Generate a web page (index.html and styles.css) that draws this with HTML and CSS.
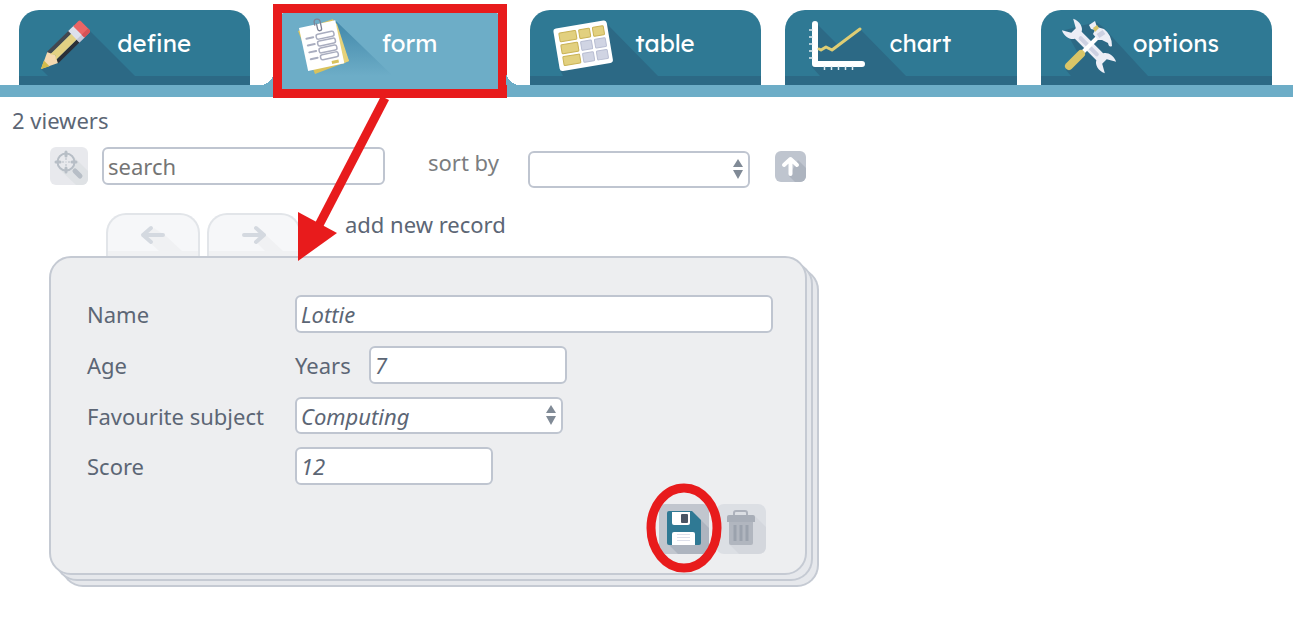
FILE: index.html
```html
<!DOCTYPE html>
<html lang="en">
  <head>
    <meta charset="utf-8">
    <title>Database - form</title>
    <link rel="stylesheet" href="styles.css">
  </head>
  <body>
    <nav class="tabs">
      <a class="tab" href="#define">
        <svg class="tab-icon" width="150" height="66" viewBox="0 0 150 66" aria-hidden="true">
          <path class="shade" d="M71 21 L116 66 H29 L22 59z"/>
          <g transform="translate(22 59) rotate(-44.5)">
            <path fill="#f5d9b0" d="M0 0 L17 -8 L20 0 L17 8z"/>
            <path fill="#d3bb4a" d="M0 0 L8 -4 L8 4z"/>
            <path fill="#434850" d="M16 -8 H48 V-4 H18z"/>
            <path fill="#2b3038" d="M16 8 H48 V4 H18z"/>
            <path fill="#e3d183" d="M17 -4 H48 V4 H17 L20 0z"/>
            <path fill="#dde0ec" d="M46 -8 H54 V8 H46z"/>
            <path fill="#c3c7d8" d="M46 4 H54 V8 H46z"/>
            <path fill="#ea6565" d="M53 -8 H60 Q62 -8 62 -6 V6 Q62 8 60 8 H53z"/>
            <path fill="#d65256" d="M53 4 H62 V6 Q62 8 60 8 H53z"/>
          </g>
        </svg>
        <span class="tab-label">define</span>
      </a>
      <a class="tab active" href="#form" aria-current="page">
        <svg class="tab-icon" width="150" height="66" viewBox="0 0 150 66" aria-hidden="true">
          <defs>
            <linearGradient id="fade" x1="0" y1="0" x2="0" y2="1">
              <stop offset="0" stop-color="#4288aa"/>
              <stop offset="1" stop-color="#6dadc7"/>
            </linearGradient>
          </defs>
          <path fill="url(#fade)" d="M62 11 L119 66 H42z"/>
          <path fill="#d9c25c" d="M24 21 L59 9 L75 51 L41 64z"/>
          <path fill="#e6d27a" d="M58 10 L63 14 L75 51 L68 54z"/>
          <g transform="translate(25 18) rotate(-12)">
            <rect width="37" height="44" fill="#fff"/>
            <g stroke="#a9adbf" stroke-width="1.5" stroke-linecap="round" fill="none">
              <path stroke-width="2" d="M5 12h7M5 19h7M5 26h7M5 33h7"/>
              <rect x="15" y="10" width="18" height="5" rx="2"/>
              <rect x="15" y="17" width="18" height="5" rx="2"/>
              <rect x="15" y="24" width="18" height="5" rx="2"/>
              <rect x="15" y="31" width="18" height="5" rx="2"/>
            </g>
            <rect x="25" y="39" width="7" height="3" fill="#d9c25c"/>
            <path fill="none" stroke="#7d8194" stroke-width="1.3" d="M16 1 V-2 Q16 -5 19 -5 T22 -2 V5 Q22 7 20 7 T18 5 V-1"/>
          </g>
        </svg>
        <span class="tab-label">form</span>
        <span class="highlight-box"></span>
        <svg class="highlight-arrow" width="70" height="170" viewBox="0 0 70 170" aria-hidden="true">
          <path stroke="#e81b1c" stroke-width="9" d="M89 1 L22 130"/>
          <path fill="#e81b1c" d="M2 115 L41 136 L2 164z"/>
        </svg>
      </a>
      <a class="tab" href="#table">
        <svg class="tab-icon" width="150" height="66" viewBox="0 0 150 66" aria-hidden="true">
          <path class="shade" d="M78 15 L128 66 H33 L30 60z"/>
          <g transform="translate(23 19) rotate(-9.5)">
            <rect width="54" height="43" rx="3" fill="#fff"/>
            <g fill="#e2d07f" stroke="#c9b255" stroke-width="1">
              <rect x="5" y="5" width="17" height="9" rx="1"/>
              <rect x="25" y="5" width="11" height="9" rx="1"/>
              <rect x="39" y="5" width="11" height="9" rx="1"/>
              <rect x="5" y="17" width="17" height="9" rx="1"/>
              <rect x="5" y="29" width="17" height="9" rx="1"/>
            </g>
            <g fill="#d0d4e3" stroke="#b8bdd2" stroke-width="1">
              <rect x="25" y="17" width="11" height="9" rx="1"/>
              <rect x="39" y="17" width="11" height="9" rx="1"/>
              <rect x="25" y="29" width="11" height="9" rx="1"/>
              <rect x="39" y="29" width="11" height="9" rx="1"/>
            </g>
          </g>
        </svg>
        <span class="tab-label">table</span>
      </a>
      <a class="tab" href="#chart">
        <svg class="tab-icon" width="150" height="66" viewBox="0 0 150 66" aria-hidden="true">
          <path class="shade" d="M33 15 L54 36 L76 20 L121 66 H35 L27 57z"/>
          <path fill="none" stroke="#fff" stroke-width="6" stroke-linecap="round" stroke-linejoin="round" d="M30 14 V54 H77"/>
          <path stroke="#dfeaf0" stroke-width="1.5" d="M24 20h4M24 27h4M24 34h4M24 41h4M24 48h4M39.5 56v4M46.5 56v4M53.5 56v4M60.5 56v4M67.5 56v4"/>
          <path fill="none" stroke="#dfcd74" stroke-width="3" stroke-linecap="round" stroke-linejoin="round" d="M34 39 L36 40 L41 37 L47 40 L75 19"/>
        </svg>
        <span class="tab-label">chart</span>
      </a>
      <a class="tab" href="#options">
        <svg class="tab-icon" width="150" height="66" viewBox="0 0 150 66" aria-hidden="true">
          <path class="shade" d="M55 12 L62 17 L107 66 H30 L25 60 L38 45 L24 20z"/>
          <g transform="translate(48 36) rotate(45) scale(.95 .8)">
            <path fill="#eceef6" d="M-16 -6 H16 C18 -11 25 -14 32 -10 L23 -4 V4 L32 10 C25 14 18 11 16 6 H-16 C-18 11 -25 14 -32 10 L-23 4 V-4 L-32 -10 C-25 -14 -18 -11 -16 -6z"/>
            <rect x="-14" y="-2" width="28" height="5" rx="2" fill="#cdd1e2"/>
          </g>
          <path stroke="#fff" stroke-width="4" d="M38 46 L59 25"/>
          <path stroke="#d9c567" stroke-width="8" stroke-linecap="round" d="M28 56 L40 44"/>
          <path fill="#eceef6" d="M48 15 L54 11 L56 17 L63 19 Q71 25 71 36 Q68 38 67 33 L61 30 L57 30 L52 24 L54 20 L50 19z"/>
          <path fill="#d9c567" d="M52 18 L56 15 L58 18 L54 22z"/>
          <path stroke="#cdd1e2" stroke-width="5" d="M57 26 L63 22"/>
        </svg>
        <span class="tab-label">options</span>
      </a>
    </nav>

    <main class="page">
      <p class="viewers">2 viewers</p>

      <div class="toolbar">
        <button class="icon-button find" type="button" aria-label="find">
          <svg width="38" height="38" viewBox="0 0 38 38" aria-hidden="true">
            <path fill="#dfe2e5" d="M24 10 L38 24 V38 H26 L9 22z"/>
            <circle cx="16" cy="15" r="8.500" fill="#e8e9ed" stroke="#b7bec6" stroke-width="2"/>
            <path stroke="#b7bec6" stroke-width="3" stroke-linecap="round" d="M6 15h4M22 15h4M16 5v4M16 21v4"/>
            <path stroke="#b7bec6" stroke-width="1" d="M12 15h2M18 15h2M16 11v2M16 17v2M15.500 15h1"/>
            <path stroke="#b7bec6" stroke-width="5" stroke-linecap="round" d="M25 24 L30 29"/>
          </svg>
        </button>
        <input class="field search" type="text" placeholder="search" aria-label="search">
        <div class="sort">
          <label class="sort-label" for="sort">sort by</label>
          <span class="select sort-select">
            <select class="field" id="sort">
              <option></option>
              <option>Name</option>
              <option>Age</option>
            </select>
            <svg class="carets" width="10" height="20" viewBox="0 0 10 20" aria-hidden="true"><path d="M5 0 L10 8 H0zM0 11 H10 L5 20z"/></svg>
          </span>
          <button class="icon-button direction" type="button" aria-label="ascending">
            <svg width="31" height="31" viewBox="0 0 31 31" aria-hidden="true">
              <path fill="#adb4bf" d="M23 9 L31 17 V31 H20 L14 25z"/>
              <path fill="none" stroke="#fff" stroke-width="4" stroke-linecap="round" stroke-linejoin="round" d="M15.500 23 V8 M9 14 L15.500 8 L22 14"/>
            </svg>
          </button>
        </div>
      </div>

      <div class="records">
        <button class="step" type="button" aria-label="previous record">
          <svg width="90" height="42" viewBox="0 0 90 42" aria-hidden="true">
            <path fill="#f0f1f3" d="M46 13 L58 21 L74 36 H90 V42 H0 V36 H51 L36 22z"/>
            <path fill="none" stroke="#d4d9e0" stroke-width="4" stroke-linecap="round" stroke-linejoin="round" d="M55 20 H35 M43 13 L35 20 L43 27"/>
          </svg>
        </button>
        <button class="step" type="button" aria-label="next record">
          <svg width="90" height="42" viewBox="0 0 90 42" aria-hidden="true">
            <path fill="#f0f1f3" d="M48 13 L58 21 L74 36 H90 V42 H0 V36 H56 L48 28z"/>
            <path fill="none" stroke="#d4d9e0" stroke-width="4" stroke-linecap="round" stroke-linejoin="round" d="M35 20 H55 M47 13 L55 20 L47 27"/>
          </svg>
        </button>
        <span class="records-label">add new record</span>
      </div>

      <form class="card">
        <div class="row">
          <label for="name">Name</label>
          <input class="field wide" type="text" id="name" value="Lottie">
        </div>
        <div class="row">
          <label for="age">Age</label>
          <span class="unit">Years</span>
          <input class="field number" type="text" id="age" value="7">
        </div>
        <div class="row">
          <label for="subject">Favourite subject</label>
          <span class="select subject-select">
            <select class="field" id="subject">
              <option>Computing</option>
              <option>Maths</option>
            </select>
            <svg class="carets" width="10" height="20" viewBox="0 0 10 20" aria-hidden="true"><path d="M5 0 L10 8 H0zM0 11 H10 L5 20z"/></svg>
          </span>
        </div>
        <div class="row">
          <label for="score">Score</label>
          <input class="field number" type="text" id="score" value="12">
        </div>
        <div class="actions">
          <button class="icon-button save" type="button" aria-label="save">
            <svg width="50" height="50" viewBox="0 0 50 50" aria-hidden="true">
              <path fill="#adb4bf" d="M42 16 L50 24 V50 H19 L9 40z"/>
              <path fill="#2f7994" d="M10 7 H33 L42 16 V39 Q42 41 40 41 H10 Q8 41 8 39 V9 Q8 7 10 7z"/>
              <path fill="#fff" d="M13 8 H31 V19 Q31 21 29 21 H15 Q13 21 13 19z"/>
              <rect x="22" y="10" width="7" height="9" rx="1" fill="#4a5564"/>
              <path fill="#fff" d="M15 28 H34 Q36 28 36 30 V41 H13 V30 Q13 28 15 28z"/>
              <path stroke="#dcdfea" stroke-width="1" d="M18 30.500h13M18 33.500h13M18 36.500h13"/>
            </svg>
            <svg class="highlight-ring" width="76" height="90" viewBox="0 0 76 90" aria-hidden="true">
              <ellipse cx="38" cy="45" rx="33" ry="40"/>
            </svg>
          </button>
          <button class="icon-button delete" type="button" aria-label="delete">
            <svg width="50" height="50" viewBox="0 0 50 50" aria-hidden="true">
              <path fill="#d4d7dd" d="M39 12 L50 23 V42 Q50 50 42 50 H23 L13 40z"/>
              <path fill="none" stroke="#adb2bc" stroke-width="2" d="M18 12 V9 Q18 7 20 7 H29 Q31 7 31 9 V12"/>
              <path fill="#b1b6bf" d="M13 17 H37 V39 Q37 41 35 41 H15 Q13 41 13 39z"/>
              <path fill="#a8aeb8" d="M13 11 H37 Q39 11 39 13 V18 H11 V13 Q11 11 13 11z"/>
              <path stroke="#9ba2ad" stroke-width="3" d="M19 21v16M25 21v16M31 21v16"/>
            </svg>
          </button>
        </div>
      </form>
    </main>
  </body>
</html>
```
FILE: styles.css
```css
* {
  box-sizing: border-box;
}
body {
  margin: 0;
  background: #fff;
  color: #5c6675;
  font-family: "Trebuchet MS", "Noto Sans", sans-serif;
  font-size: 22px;
  line-height: 22px;
}
button {
  padding: 0;
  border: none;
  cursor: pointer;
}
svg {
  display: block;
}

/* tabs */
.tabs {
  display: grid;
  grid-template-columns: repeat(5, 1fr);
  gap: 24px;
  padding: 10px 21px 0 19px;
  border-bottom: 12px solid #6dadc7;
}
.tab {
  position: relative;
  display: grid;
  align-items: center;
  height: 75px;
  border-bottom: 9px solid #2c6985;
  border-radius: 20px 20px 0 0;
  background: #2f7994;
  color: #fff;
  font-family: "Lexend", "Lexend Deca", Lato, sans-serif;
  font-size: 24px;
  text-decoration: none;
}
.tab-icon,
.tab-label {
  grid-area: 1 / 1;
}
.tab-label {
  padding-left: 39px;
  text-align: center;
}
.shade {
  fill: #2c6985;
}
.tab.active {
  border-color: #6dadc7;
  background: #6dadc7;
}
.tab.active::before,
.tab.active::after {
  content: "";
  position: absolute;
  bottom: -9px;
  width: 14px;
  height: 14px;
}
.tab.active::before {
  right: 100%;
  background: radial-gradient(circle at 0 0, transparent 14px, #6dadc7 14px);
}
.tab.active::after {
  left: 100%;
  background: radial-gradient(circle at 100% 0, transparent 14px, #6dadc7 14px);
}

/* red markers */
.highlight-box {
  position: absolute;
  inset: -6px -1px -22px -1px;
  border: 9px solid #e81b1c;
}
.highlight-arrow {
  position: absolute;
  top: 87px;
  left: 22px;
  z-index: 1;
  overflow: visible;
}
.highlight-ring {
  position: absolute;
  top: -21px;
  left: -13px;
}
.highlight-ring ellipse {
  fill: none;
  stroke: #e81b1c;
  stroke-width: 9px;
}

/* controls */
.page {
  padding: 12px 12px 40px;
}
.viewers {
  margin: 0 0 16px;
}
.field {
  height: 38px;
  padding: 0 4px;
  border: 2px solid #bfc5d0;
  border-radius: 6px;
  background: #fff;
  color: #5c6675;
  font: inherit;
}
.field::placeholder {
  color: #757575;
}
.select {
  position: relative;
  height: 37px;
}
.select .field {
  width: 100%;
  height: 37px;
  line-height: 32px;
  appearance: none;
}
.carets {
  position: absolute;
  top: 8px;
  right: 7px;
  fill: #808a96;
  pointer-events: none;
}
.icon-button {
  position: relative;
  flex: none;
  border-radius: 6px;
}
.find {
  overflow: hidden;
  background: #e8e9ed;
}
.toolbar {
  display: flex;
  align-items: flex-start;
  gap: 14px;
  padding-left: 38px;
}
.search {
  width: 283px;
}
.sort {
  display: flex;
  align-items: flex-start;
  padding: 4px 0 0 29px;
}
.sort-label {
  width: 100px;
  color: #7b7d80;
}
.sort-select {
  width: 222px;
}
.direction {
  overflow: hidden;
  margin-left: 25px;
  background: #bfc5cf;
}

/* record steps */
.records {
  display: flex;
  gap: 7px;
  margin-top: 25px;
  padding-left: 94px;
}
.step {
  overflow: hidden;
  width: 94px;
  height: 43px;
  border: 2px solid #e2e5e9;
  border-bottom: none;
  border-radius: 20px 20px 0 0;
  background: #f6f7f9;
}
.records-label {
  padding-left: 37px;
}

/* record card with two sheets behind */
.card {
  display: flex;
  flex-direction: column;
  gap: 13px;
  max-width: 758px;
  margin-left: 37px;
  padding: 37px 32px 19px 36px;
  border: 2px solid #c5cad3;
  border-radius: 22px;
  background: #edeef0;
  box-shadow: 6px 6px 0 -2px #e6e8ec, 6px 6px 0 0 #c5cad3,
    12px 12px 0 -2px #e6e8ec, 12px 12px 0 0 #c5cad3;
}
.row {
  display: grid;
  grid-template-columns: 208px auto 1fr;
  align-items: center;
  justify-items: start;
}
.row .field {
  font-style: italic;
}
.wide {
  grid-column: 2 / 4;
  width: 100%;
}
.unit {
  width: 74px;
}
.number {
  width: 198px;
}
.subject-select {
  width: 268px;
}
.actions {
  display: flex;
  justify-content: flex-end;
  gap: 7px;
  padding: 6px 7px 0 0;
}
.save {
  z-index: 1;
  background: #c1c6ce;
}
.delete {
  border-radius: 8px;
  background: #dcdfe4;
}
```
